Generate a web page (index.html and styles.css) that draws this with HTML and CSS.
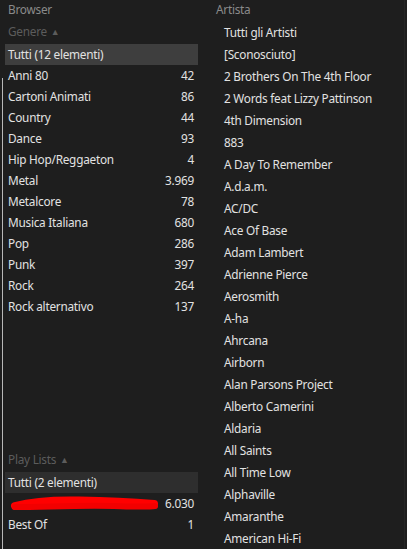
FILE: index.html
```html
<!DOCTYPE html>
<html lang="it">
<head>
<meta charset="utf-8">
<title>Browser</title>
<link rel="stylesheet" href="styles.css">
</head>
<body>
<div class="app">
  <div class="edge"></div>
  <section class="left">
    <div class="panel-title">Browser</div>
    <div class="col-head">Genere <span class="arrow">▲</span></div>
    <ul class="list">
      <li class="row sel"><span>Tutti (12 elementi)</span></li>
      <li class="row"><span>Anni 80</span><span class="n">42</span></li>
      <li class="row"><span>Cartoni Animati</span><span class="n">86</span></li>
      <li class="row"><span>Country</span><span class="n">44</span></li>
      <li class="row"><span>Dance</span><span class="n">93</span></li>
      <li class="row"><span>Hip Hop/Reggaeton</span><span class="n">4</span></li>
      <li class="row"><span>Metal</span><span class="n">3.969</span></li>
      <li class="row"><span>Metalcore</span><span class="n">78</span></li>
      <li class="row"><span>Musica Italiana</span><span class="n">680</span></li>
      <li class="row"><span>Pop</span><span class="n">286</span></li>
      <li class="row"><span>Punk</span><span class="n">397</span></li>
      <li class="row"><span>Rock</span><span class="n">264</span></li>
      <li class="row"><span>Rock alternativo</span><span class="n">137</span></li>
    </ul>
    <div class="spacer"></div>
    <div class="col-head">Play Lists <span class="arrow">▲</span></div>
    <ul class="list bottom">
      <li class="row sel2"><span>Tutti (2 elementi)</span></li>
      <li class="row"><svg class="scribble" width="152" height="18" viewBox="0 0 152 18"><path d="M6 11 C 25 6, 45 5, 70 5.5 C 95 6, 120 7, 145 9" fill="none" stroke="#ff0000" stroke-width="8" stroke-linecap="round"/><path d="M6 12 C 35 12, 70 10, 105 11 C 125 11.5, 138 12, 146 11" fill="none" stroke="#f20000" stroke-width="6" stroke-linecap="round"/></svg><span class="n">6.030</span></li>
      <li class="row"><span>Best Of</span><span class="n">1</span></li>
    </ul>
  </section>
  <section class="right">
    <div class="panel-title artist">Artista</div>
    <ul class="alist">
      <li>Tutti gli Artisti</li>
      <li>[Sconosciuto]</li>
      <li>2 Brothers On The 4th Floor</li>
      <li>2 Words feat Lizzy Pattinson</li>
      <li>4th Dimension</li>
      <li>883</li>
      <li>A Day To Remember</li>
      <li>A.d.a.m.</li>
      <li>AC/DC</li>
      <li>Ace Of Base</li>
      <li>Adam Lambert</li>
      <li>Adrienne Pierce</li>
      <li>Aerosmith</li>
      <li>A-ha</li>
      <li>Ahrcana</li>
      <li>Airborn</li>
      <li>Alan Parsons Project</li>
      <li>Alberto Camerini</li>
      <li>Aldaria</li>
      <li>All Saints</li>
      <li>All Time Low</li>
      <li>Alphaville</li>
      <li>Amaranthe</li>
      <li>American Hi-Fi</li>
    </ul>
  </section>
</div>
</body>
</html>
```
FILE: styles.css
```css
* { box-sizing: border-box; }
html, body {
  margin: 0;
  padding: 0;
  background: #1e1e1e;
}
body {
  font-family: "Noto Sans", "Open Sans", sans-serif;
  font-size: 11.8px;
  letter-spacing: -0.25px;
  color: #e2e2e2;
  width: 407px;
  height: 549px;
  overflow: hidden;
}
.app {
  display: flex;
  height: 549px;
}
.edge {
  width: 1px;
  margin-left: 2px;
  margin-top: 78px;
  background: #b8b8b8;
  flex: none;
}
.left {
  width: 197px;
  flex: none;
  display: flex;
  flex-direction: column;
  padding-bottom: 14px;
}
.panel-title {
  height: 18px;
  line-height: 18px;
  color: #8a8a8a;
  padding-left: 5px;
}
.col-head {
  height: 26px;
  line-height: 26px;
  color: #5c5c5c;
  padding-left: 5px;
}
.arrow {
  font-size: 9px;
  vertical-align: 1px;
  margin-left: 1px;
}
.list {
  list-style: none;
  margin: 0;
  padding: 0 2px 0 2px;
}
.row {
  height: 21px;
  line-height: 21px;
  display: flex;
  justify-content: space-between;
  align-items: center;
  padding: 0 4px 0 3px;
  white-space: nowrap;
}
.sel { background: #3e3e3e; }
.sel2 { background: #2e2e2e; }
.spacer { flex: 1; }
.scribble { display: block; margin-left: 1px; }
.right {
  flex: 1;
  border-right: 1px solid #262626;
  margin-right: 2px;
}
.artist { padding-left: 16px; }
.alist {
  list-style: none;
  margin: 0;
  padding: 3px 0 0 24px;
}
.alist li {
  height: 22px;
  line-height: 22px;
  white-space: nowrap;
}
```
